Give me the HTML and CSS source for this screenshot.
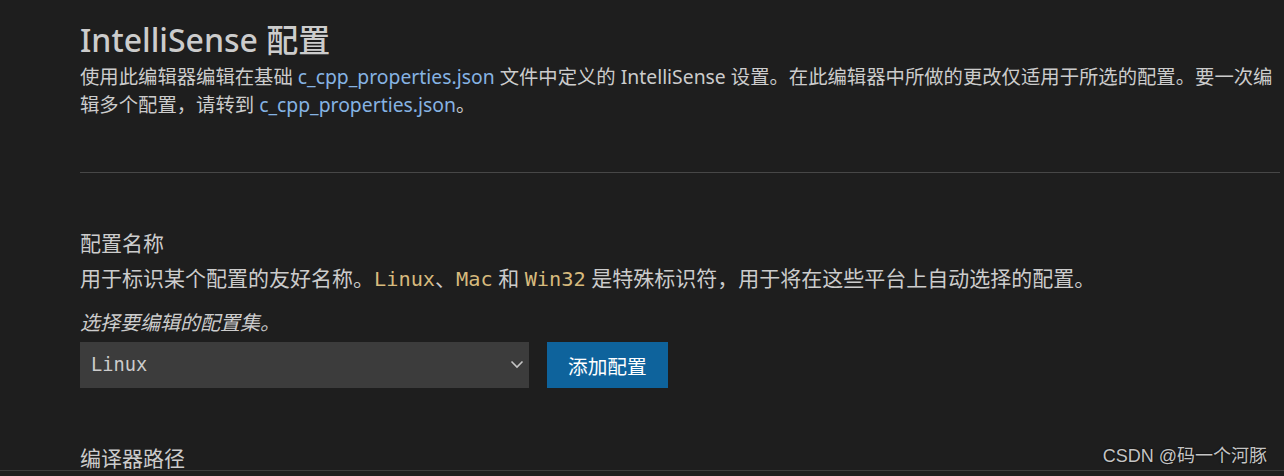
FILE: index.html
```html
<!DOCTYPE html>
<html lang="zh-CN">
<head>
<meta charset="utf-8">
<title>IntelliSense 配置</title>
<link rel="stylesheet" href="styles.css">
</head>
<body>
<div class="page">
  <main class="content">
    <header class="intro">
      <h1 class="title">IntelliSense 配置</h1>
      <p class="lead">使用此编辑器编辑在基础 <a class="link">c_cpp_properties.json</a> 文件中定义的 IntelliSense 设置。在此编辑器中所做的更改仅适用于所选的配置。要一次编辑多个配置，请转到 <a class="link">c_cpp_properties.json</a>。</p>
    </header>
    <hr class="divider">
    <section class="setting">
      <h2 class="setting-title">配置名称</h2>
      <p class="setting-desc">用于标识某个配置的友好名称。<code class="code">Linux</code>、<code class="code">Mac</code> 和 <code class="code">Win32</code> 是特殊标识符，用于将在这些平台上自动选择的配置。</p>
      <p class="setting-hint">选择要编辑的配置集。</p>
      <div class="config-row">
        <div class="select">
          <span class="select-value">Linux</span>
          <svg class="chevron" width="16" height="16" viewBox="0 0 16 16" aria-hidden="true"><path d="M2.5 5.5 L8 11 L13.5 5.5" fill="none" stroke="#c5c5c5" stroke-width="1.6"/></svg>
        </div>
        <button class="btn">添加配置</button>
      </div>
    </section>
    <section class="setting">
      <h2 class="setting-title setting-title-next">编译器路径</h2>
    </section>
  </main>
  <div class="watermark">CSDN @码一个河豚</div>
</div>
</body>
</html>
```

FILE: styles.css
```css
html, body {
  margin: 0;
  padding: 0;
  background: #1e1e1e;
  overflow: hidden;
}

body {
  font-family: "Noto Sans", "Noto Sans CJK SC", sans-serif;
  color: #cccccc;
}

.page {
  position: relative;
  height: 470px;
  border-bottom: 1px solid #3c3c3c;
  overflow: hidden;
}

.content {
  margin-left: 80px;
  width: 1200px;
}

.title {
  margin: 20px 0 0;
  font-size: 32px;
  line-height: 40px;
  font-weight: 500;
  color: #cccccc;
}

.lead {
  margin: 3px 0 0;
  font-size: 19.35px;
  line-height: 28px;
}

.link {
  color: #86b3e3;
  text-decoration: none;
}

.divider {
  margin: 53px 0 0;
  border: 0;
  border-top: 1px solid #474747;
  height: 0;
}

.setting-title {
  margin: 56px 0 0;
  font-size: 21px;
  line-height: 28px;
  font-weight: 400;
}

.setting-title-next {
  margin-top: 56px;
}

.setting-desc {
  margin: 7px 0 0;
  font-size: 21px;
  line-height: 28px;
}

.code {
  font-family: "DejaVu Sans Mono", monospace;
  font-size: 20.3px;
  color: #d7ba7d;
}

.setting-hint {
  margin: 16px 0 0;
  font-size: 20px;
  line-height: 28px;
  font-style: italic;
}

.config-row {
  margin-top: 5px;
  display: flex;
  gap: 18px;
  height: 46px;
}

.select {
  width: 449px;
  box-sizing: border-box;
  background: #3c3c3c;
  display: flex;
  align-items: center;
  justify-content: space-between;
  padding: 0 4px 2px 11px;
}

.select-value {
  font-family: "DejaVu Sans Mono", monospace;
  font-size: 18.7px;
  color: #cccccc;
}

.chevron {
  width: 16px;
  height: 16px;
}

.btn {
  background: #0e639c;
  color: #ffffff;
  border: 0;
  padding: 0 21px;
  font-family: "Noto Sans CJK SC", sans-serif;
  font-size: 19.7px;
}

.watermark {
  position: absolute;
  right: 17px;
  bottom: 3px;
  font-family: "Liberation Sans", "Noto Sans CJK SC", sans-serif;
  font-size: 18px;
  line-height: 22px;
  color: #c4c4c4;
  text-shadow: 0 0 2px #000000;
}
```
